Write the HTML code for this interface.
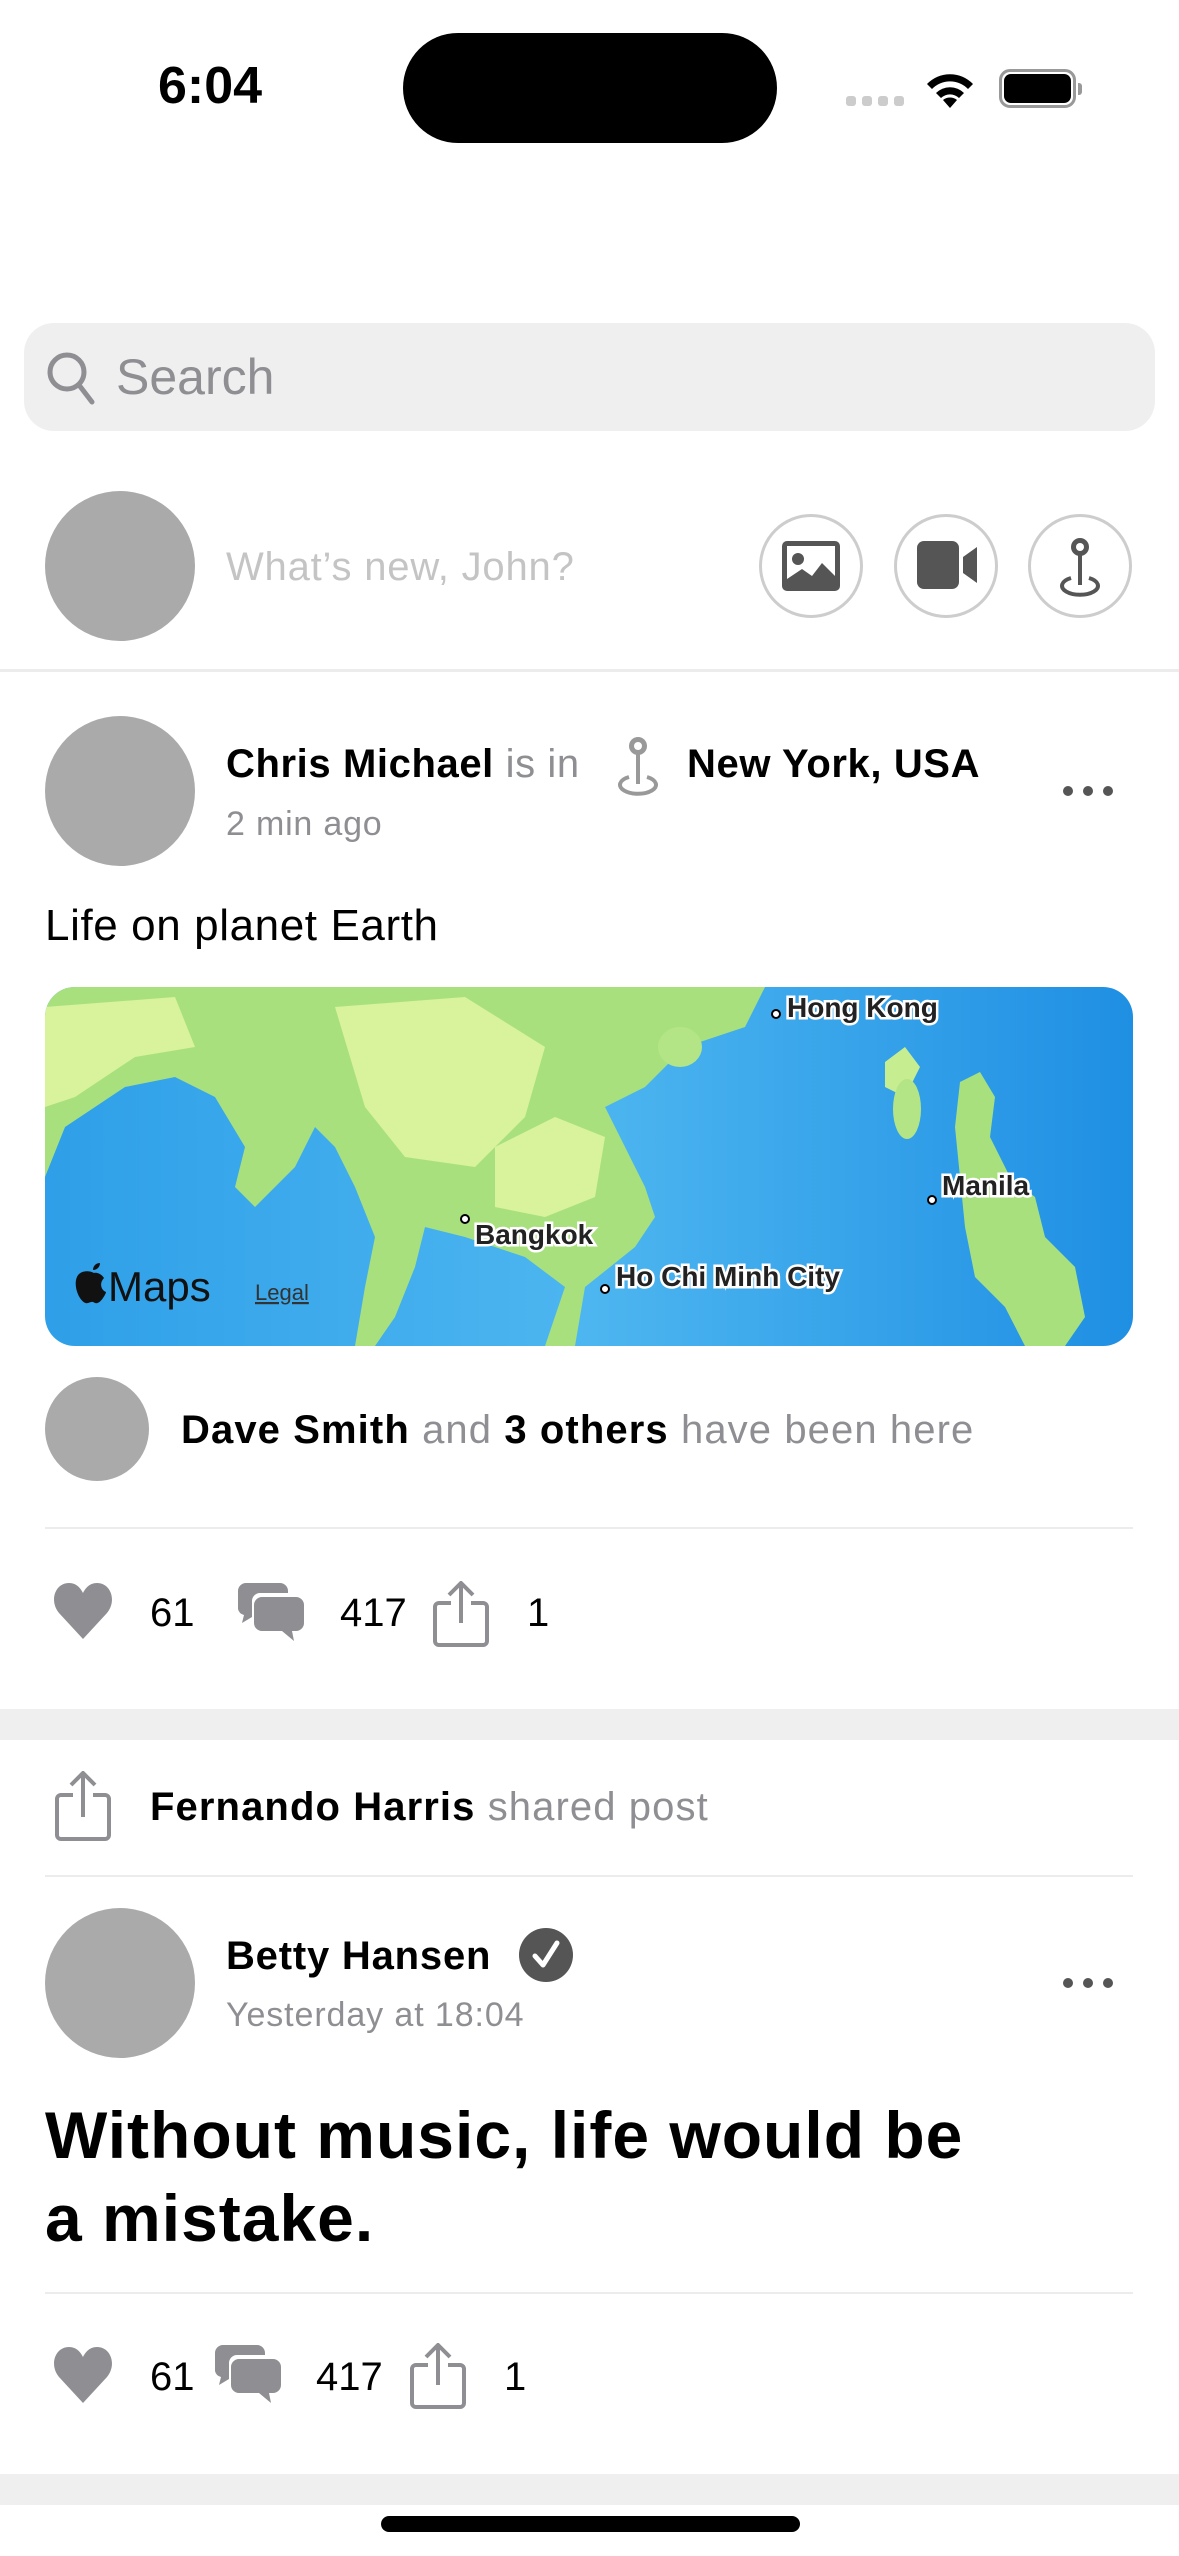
<!DOCTYPE html>
<html><head><meta charset="utf-8"><style>
*{margin:0;padding:0;box-sizing:border-box}
body{width:1179px;height:2556px;background:#fff;font-family:"Liberation Sans",sans-serif;position:relative;overflow:hidden;color:#000}
.a{position:absolute}
.av{position:absolute;border-radius:50%;background:#aaa}
.t{position:absolute;white-space:nowrap;line-height:1}
.g{color:#8e8e93}
.b{font-weight:bold}
.hr{position:absolute;height:2px;background:#ececec}
.band{position:absolute;left:0;width:1179px;background:#efefef}
.circ{position:absolute;width:104px;height:104px;border:3px solid #cdcdcd;border-radius:50%;top:514px}
.dots{position:absolute;width:50px;height:10px}
.dots i{position:absolute;top:0;width:10px;height:10px;border-radius:50%;background:#555}
</style></head><body>
<!-- status bar -->
<div class="t b" style="left:158px;top:60px;font-size:52px;letter-spacing:0px">6:04</div>
<div class="a" style="left:403px;top:33px;width:374px;height:110px;border-radius:55px;background:#000"></div>
<div class="a" style="left:846px;top:96px;width:58px;height:10px">
<i class="a" style="left:0;width:10px;height:10px;border-radius:3px;background:#ccc"></i><i class="a" style="left:16px;width:10px;height:10px;border-radius:3px;background:#ccc"></i><i class="a" style="left:32px;width:10px;height:10px;border-radius:3px;background:#ccc"></i><i class="a" style="left:48px;width:10px;height:10px;border-radius:3px;background:#ccc"></i></div>
<svg class="a" style="left:924px;top:66px" width="52" height="42" viewBox="0 0 52 42"><path d="M26 42 L19 34 A11 11 0 0 1 33 34 Z" fill="#000"/><path d="M12 27 A20 20 0 0 1 40 27 L35 32 A13 13 0 0 0 17 32Z" fill="#000"/><path d="M3 18 A32 32 0 0 1 49 18 L44 23 A25 25 0 0 0 8 23Z" fill="#000"/></svg>
<div class="a" style="left:999px;top:69px;width:77px;height:39px;border:3px solid #999;border-radius:11px"></div>
<div class="a" style="left:1004px;top:74px;width:67px;height:29px;background:#000;border-radius:7px"></div>
<div class="a" style="left:1078px;top:83px;width:4px;height:12px;background:#999;border-radius:0 3px 3px 0"></div>

<!-- search -->
<div class="a" style="left:24px;top:323px;width:1131px;height:108px;border-radius:30px;background:#efefef"></div>
<svg class="a" style="left:46px;top:350px" width="52" height="56" viewBox="0 0 52 56"><circle cx="21" cy="22" r="17" fill="none" stroke="#8e8e93" stroke-width="5"/><path d="M33 35 L46 52" stroke="#8e8e93" stroke-width="5" stroke-linecap="round"/></svg>
<div class="t g" style="left:116px;top:352px;font-size:50px">Search</div>

<!-- composer -->
<div class="av" style="left:45px;top:491px;width:150px;height:150px"></div>
<div class="t" style="left:226px;top:547px;font-size:40px;letter-spacing:0.8px;color:#c4c4c4">What’s new, John?</div>
<div class="circ" style="left:759px"></div>
<div class="circ" style="left:894px"></div>
<div class="circ" style="left:1028px"></div>
<svg class="a" style="left:782px;top:541px" width="58" height="50" viewBox="0 0 58 50"><rect x="0" y="0" width="58" height="50" rx="5" fill="#555"/><rect x="5" y="5" width="48" height="40" fill="#fff"/><circle cx="16" cy="18" r="6" fill="#555"/><path d="M5 45 L5 38 L20 28 L30 35 L40 22 L53 35 L53 45Z" fill="#555"/></svg>
<svg class="a" style="left:917px;top:541px" width="62" height="48" viewBox="0 0 62 48"><rect x="0" y="0" width="42" height="48" rx="7" fill="#555"/><path d="M46 16 L60 6 L60 42 L46 32Z" fill="#555"/></svg>
<svg class="a" style="left:1054px;top:535px" width="52" height="62" viewBox="0 0 52 62"><circle cx="26" cy="12" r="9" fill="#555"/><circle cx="26" cy="12" r="4" fill="#fff"/><path d="M26 20 L26 50" stroke="#555" stroke-width="4"/><path d="M17 43 A18 9 0 1 0 35 43" fill="none" stroke="#555" stroke-width="4"/></svg>
<div class="a" style="left:0;top:669px;width:1179px;height:3px;background:#ececec"></div>

<!-- post 1 -->
<div class="av" style="left:45px;top:716px;width:150px;height:150px"></div>
<div class="t" style="left:226px;top:744px;font-size:40px;letter-spacing:0.6px"><span style="font-weight:600">Chris Michael</span> <span class="g">is in</span></div>
<svg class="a" style="left:610px;top:734px" width="56" height="62" viewBox="0 0 52 62"><circle cx="26" cy="12" r="9" fill="#999"/><circle cx="26" cy="12" r="4" fill="#fff"/><path d="M26 20 L26 50" stroke="#999" stroke-width="4"/><path d="M17 43 A18 9 0 1 0 35 43" fill="none" stroke="#999" stroke-width="4"/></svg>
<div class="t" style="left:687px;top:744px;font-size:40px;letter-spacing:0.6px;font-weight:600">New York, USA</div>
<div class="t g" style="left:226px;top:807px;font-size:34px;letter-spacing:0.8px">2 min ago</div>
<div class="dots" style="left:1063px;top:786px"><i style="left:0"></i><i style="left:20px"></i><i style="left:40px"></i></div>
<div class="t" style="left:45px;top:904px;font-size:44px;letter-spacing:0.6px">Life on planet Earth</div>

<svg class="a" style="left:45px;top:987px" width="1088" height="359" viewBox="0 0 1088 359">
<defs><clipPath id="c"><rect width="1088" height="359" rx="30"/></clipPath>
<linearGradient id="o" x1="0" y1="0" x2="1" y2="0"><stop offset="0" stop-color="#2e9fe8"/><stop offset=".5" stop-color="#4db6f0"/><stop offset="1" stop-color="#1f8fe3"/></linearGradient></defs>
<g clip-path="url(#c)">
<rect width="1088" height="359" fill="url(#o)"/>
<path d="M0 0 L720 0 L700 40 L640 60 L600 100 L560 120 L580 160 L600 200 L610 230 L590 260 L540 300 L530 359 L500 359 L520 300 L480 270 L420 250 L380 240 L370 280 L350 330 L330 359 L310 359 L320 300 L330 250 L310 200 L290 160 L270 140 L250 180 L210 220 L190 200 L200 160 L170 110 L130 90 L80 100 L20 140 L0 190Z" fill="#a9e07e"/>
<path d="M290 20 L420 10 L500 60 L480 130 L430 180 L360 170 L320 120Z" fill="#d8f39b"/>
<path d="M0 20 L130 10 L150 60 L90 70 L30 110 L0 120Z" fill="#d8f39b"/>
<path d="M450 160 L510 130 L560 150 L550 210 L500 230 L450 220Z" fill="#d8f39b"/>
<ellipse cx="635" cy="60" rx="22" ry="20" fill="#b3e587"/>
<path d="M840 75 L860 60 L875 80 L860 110 L840 100Z" fill="#c6ed8f"/>
<ellipse cx="862" cy="122" rx="14" ry="30" fill="#b3e587"/>
<path d="M915 95 L935 85 L950 110 L945 150 L965 190 L990 210 L1000 250 L1030 280 L1040 330 L1020 359 L980 359 L960 320 L930 290 L920 240 L915 190 L910 140Z" fill="#a9e07e"/>
<circle cx="731" cy="27" r="4" fill="#fff" stroke="#000" stroke-width="2"/>
<circle cx="420" cy="232" r="4" fill="#fff" stroke="#000" stroke-width="2"/>
<circle cx="560" cy="302" r="4" fill="#fff" stroke="#000" stroke-width="2"/>
<circle cx="887" cy="213" r="4" fill="#fff" stroke="#000" stroke-width="2"/>
<g font-family="Liberation Sans" font-weight="bold" font-size="28" fill="#222" stroke="#fff" stroke-width="5" paint-order="stroke">
<text x="742" y="30">Hong Kong</text><text x="897" y="208">Manila</text><text x="430" y="257">Bangkok</text><text x="571" y="299">Ho Chi Minh City</text></g>
<path d="M49 286 C44 283 37 284 34 287 C29 292 30 303 35 311 C37 314 40 317 43 316 C46 315 47 314 50 316 C53 317 56 314 58 311 C60 308 61 306 61 305 C56 303 54 296 59 291 C57 288 53 285 49 286Z M48 283 C48 279 51 276 55 276 C55 280 52 283 48 283Z" fill="#111"/>
<text x="63" y="314" font-family="Liberation Sans" font-size="42" fill="#111">Maps</text>
<text x="210" y="313" font-family="Liberation Sans" font-size="22" fill="#333" text-decoration="underline">Legal</text>
</g></svg>

<div class="av" style="left:45px;top:1377px;width:104px;height:104px"></div>
<div class="t" style="left:181px;top:1410px;font-size:40px;letter-spacing:1.1px"><span style="font-weight:600">Dave Smith</span> <span class="g">and</span> <span style="font-weight:600">3 others</span> <span class="g">have been here</span></div>
<div class="hr" style="left:45px;top:1527px;width:1088px"></div>

<svg class="a" style="left:53px;top:1583px" width="60" height="56" viewBox="0 0 60 56"><path d="M30 56 L6 30 C-4 18 2 0 16 0 C24 0 28 6 30 10 C32 6 36 0 44 0 C58 0 64 18 54 30Z" fill="#8e8e93"/></svg>
<div class="t" style="left:150px;top:1593px;font-size:40px">61</div>
<svg class="a" style="left:238px;top:1583px" width="66" height="58" viewBox="0 0 66 58"><path d="M8 0 H42 A8 8 0 0 1 50 8 V10 H22 A8 8 0 0 0 14 18 V34 L4 40 L6 32 A8 8 0 0 1 0 26 V8 A8 8 0 0 1 8 0Z" fill="#8e8e93"/><path d="M24 14 H58 A8 8 0 0 1 66 22 V40 A8 8 0 0 1 58 48 H54 L56 58 L44 48 H24 A8 8 0 0 1 16 40 V22 A8 8 0 0 1 24 14Z" fill="#8e8e93"/></svg>
<div class="t" style="left:340px;top:1593px;font-size:40px">417</div>
<svg class="a" style="left:433px;top:1581px" width="56" height="66" viewBox="0 0 56 66"><path d="M18 22 H6 A4 4 0 0 0 2 26 V60 A4 4 0 0 0 6 64 H50 A4 4 0 0 0 54 60 V26 A4 4 0 0 0 50 22 H38" fill="none" stroke="#8e8e93" stroke-width="4"/><path d="M28 42 V3 M16 14 L28 2 L40 14" fill="none" stroke="#8e8e93" stroke-width="4"/></svg>
<div class="t" style="left:527px;top:1593px;font-size:40px">1</div>

<div class="band" style="top:1709px;height:31px"></div>

<!-- shared -->
<svg class="a" style="left:55px;top:1771px" width="56" height="70" viewBox="0 0 56 70"><path d="M18 24 H6 A4 4 0 0 0 2 28 V64 A4 4 0 0 0 6 68 H50 A4 4 0 0 0 54 64 V28 A4 4 0 0 0 50 24 H38" fill="none" stroke="#8e8e93" stroke-width="4"/><path d="M28 46 V3 M16 14 L28 2 L40 14" fill="none" stroke="#8e8e93" stroke-width="4"/></svg>
<div class="t" style="left:150px;top:1787px;font-size:40px;letter-spacing:1.1px"><span style="font-weight:600">Fernando Harris</span> <span class="g">shared post</span></div>
<div class="hr" style="left:45px;top:1875px;width:1088px"></div>

<div class="av" style="left:45px;top:1908px;width:150px;height:150px"></div>
<div class="t" style="left:226px;top:1936px;font-size:40px;letter-spacing:0.8px;font-weight:600">Betty Hansen</div>
<svg class="a" style="left:518px;top:1927px" width="56" height="56" viewBox="0 0 56 56"><circle cx="28" cy="28" r="27" fill="#555"/><path d="M17 29 L25 38 L39 16" fill="none" stroke="#fff" stroke-width="5" stroke-linecap="round" stroke-linejoin="round"/></svg>
<div class="t g" style="left:226px;top:1998px;font-size:34px;letter-spacing:0.9px">Yesterday at 18:04</div>
<div class="dots" style="left:1063px;top:1978px"><i style="left:0"></i><i style="left:20px"></i><i style="left:40px"></i></div>
<div class="t b" style="left:45px;top:2094px;font-size:66px;line-height:83px;letter-spacing:1px">Without music, life would be<br>a mistake.</div>
<div class="hr" style="left:45px;top:2292px;width:1088px"></div>

<svg class="a" style="left:53px;top:2347px" width="60" height="56" viewBox="0 0 60 56"><path d="M30 56 L6 30 C-4 18 2 0 16 0 C24 0 28 6 30 10 C32 6 36 0 44 0 C58 0 64 18 54 30Z" fill="#8e8e93"/></svg>
<div class="t" style="left:150px;top:2357px;font-size:40px">61</div>
<svg class="a" style="left:215px;top:2345px" width="66" height="58" viewBox="0 0 66 58"><path d="M8 0 H42 A8 8 0 0 1 50 8 V10 H22 A8 8 0 0 0 14 18 V34 L4 40 L6 32 A8 8 0 0 1 0 26 V8 A8 8 0 0 1 8 0Z" fill="#8e8e93"/><path d="M24 14 H58 A8 8 0 0 1 66 22 V40 A8 8 0 0 1 58 48 H54 L56 58 L44 48 H24 A8 8 0 0 1 16 40 V22 A8 8 0 0 1 24 14Z" fill="#8e8e93"/></svg>
<div class="t" style="left:316px;top:2357px;font-size:40px">417</div>
<svg class="a" style="left:410px;top:2343px" width="56" height="66" viewBox="0 0 56 66"><path d="M18 22 H6 A4 4 0 0 0 2 26 V60 A4 4 0 0 0 6 64 H50 A4 4 0 0 0 54 60 V26 A4 4 0 0 0 50 22 H38" fill="none" stroke="#8e8e93" stroke-width="4"/><path d="M28 42 V3 M16 14 L28 2 L40 14" fill="none" stroke="#8e8e93" stroke-width="4"/></svg>
<div class="t" style="left:504px;top:2357px;font-size:40px">1</div>

<div class="band" style="top:2474px;height:31px"></div>
<div class="a" style="left:381px;top:2516px;width:419px;height:16px;border-radius:8px;background:#000"></div>
</body></html>
